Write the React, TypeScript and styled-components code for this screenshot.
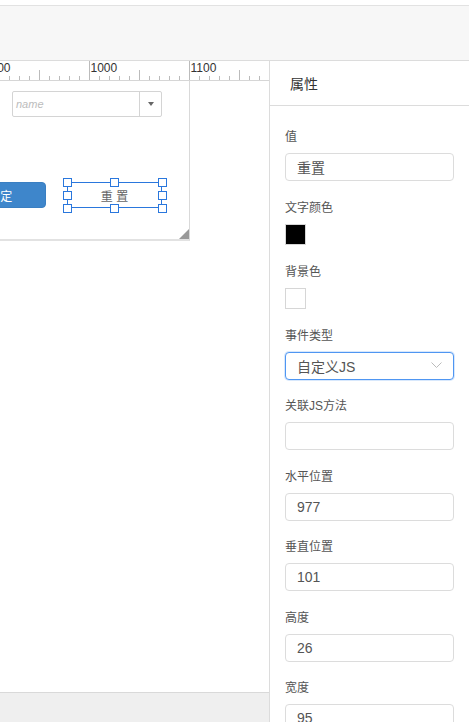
import React from 'react'
import styled, { createGlobalStyle } from 'styled-components'

const GlobalStyle = createGlobalStyle`
  html, body {
    margin: 0;
    padding: 0;
    background: #fff;
    overflow: hidden;
  }
  * {
    box-sizing: border-box;
  }
`

const cjk = `"Liberation Sans", "Noto Sans CJK SC", sans-serif`

const Shell = styled.div`
  width: 469px;
  height: 722px;
  display: flex;
  flex-direction: column;
  padding-top: 5px;
  font-family: ${cjk};
  overflow: hidden;
`

const Toolbar = styled.div`
  height: 56px;
  flex-shrink: 0;
  background: #f7f7f7;
  border-top: 1px solid #e2e2e2;
  border-bottom: 1px solid #dcdcdc;
`

const Main = styled.div`
  flex: 1;
  display: flex;
  min-height: 0;
`

const Editor = styled.div`
  width: 269px;
  flex-shrink: 0;
  display: flex;
  flex-direction: column;
`

const RulerBar = styled.div`
  height: 20px;
  flex-shrink: 0;
  border-bottom: 1px solid #d6d6d6;
  overflow: hidden;
`

const Canvas = styled.div`
  flex: 1;
  position: relative;
  overflow: hidden;
  background: #fff;
`

const StatusBar = styled.div`
  height: 30px;
  flex-shrink: 0;
  background: #efefef;
  border-top: 1px solid #d9d9d9;
`

const Artboard = styled.div`
  position: absolute;
  left: 0;
  top: 0;
  width: 190px;
  height: 160px;
  border-right: 1px solid #d9d9d9;
  border-bottom: 2px solid #e2e2e2;
`

const Grip = styled.div`
  position: absolute;
  right: 0;
  bottom: 0;
  width: 0;
  height: 0;
  border-left: 10px solid transparent;
  border-bottom: 10px solid #999;
`

const Widget = styled.div<{ $x: number; $y: number; $w: number; $h: number }>`
  position: absolute;
  left: ${p => p.$x}px;
  top: ${p => p.$y}px;
  width: ${p => p.$w}px;
  height: ${p => p.$h}px;
`

const NameSelect = styled.div`
  width: 100%;
  height: 100%;
  display: flex;
  border: 1px solid #d4d4d4;
  border-radius: 2px;
  background: #fff;
`

const NamePlaceholder = styled.span`
  flex: 1;
  padding-left: 3px;
  font-size: 11px;
  line-height: 24px;
  font-style: italic;
  color: #bcbcbc;
`

const CaretBox = styled.span`
  width: 22px;
  border-left: 1px solid #d4d4d4;
  display: flex;
  align-items: center;
  justify-content: center;
`

const Caret = styled.span`
  width: 0;
  height: 0;
  border-left: 3.5px solid transparent;
  border-right: 3.5px solid transparent;
  border-top: 4px solid #666;
`

const CanvasButton = styled.div<{ $primary?: boolean }>`
  width: 100%;
  height: 100%;
  display: flex;
  align-items: center;
  justify-content: center;
  font-size: 12px;
  white-space: pre;
  border-radius: ${p => (p.$primary ? '4px' : '0')};
  background: ${p => (p.$primary ? '#3e86cb' : 'transparent')};
  color: ${p => (p.$primary ? '#fff' : '#666')};
  border: 1px solid ${p => (p.$primary ? '#3a7fc2' : '#2a77dd')};
`

const Handle = styled.span<{ $x: string; $y: string }>`
  position: absolute;
  left: ${p => p.$x};
  top: ${p => p.$y};
  width: 9px;
  height: 9px;
  margin: -4.5px 0 0 -4.5px;
  background: #fff;
  border: 1.5px solid #2a77dd;
`

const Panel = styled.div`
  flex: 1;
  border-left: 1px solid #dcdcdc;
  display: flex;
  flex-direction: column;
  overflow: hidden;
`

const PanelHeader = styled.div`
  height: 45px;
  flex-shrink: 0;
  padding-left: 20px;
  display: flex;
  align-items: center;
  border-bottom: 1px solid #dcdcdc;
  font-size: 14px;
  color: #333;
`

const Form = styled.div`
  padding: 22px 15px 0 15px;
  display: flex;
  flex-direction: column;
  gap: 17.5px;
`

const Field = styled.div`
  display: flex;
  flex-direction: column;
  gap: 7px;
`

const Label = styled.div`
  font-size: 12px;
  line-height: 18px;
  color: #555;
`

const TextBox = styled.div<{ $focus?: boolean }>`
  height: 28px;
  flex-shrink: 0;
  display: flex;
  align-items: center;
  justify-content: space-between;
  padding: 0 11px;
  border: 1px solid ${p => (p.$focus ? '#4f96f2' : '#dcdcdc')};
  box-shadow: ${p => (p.$focus ? '0 0 0 1px rgba(79, 150, 242, 0.22)' : 'none')};
  border-radius: 4px;
  font-size: 14px;
  color: #555;
  background: #fff;
`

const Swatch = styled.div<{ $color: string }>`
  width: 21px;
  height: 21px;
  margin-bottom: 0.5px;
  background: ${p => p.$color};
  border: 1px solid #d6d6d6;
`

function Ruler() {
  const ticks = []
  for (let n = -10; n <= 18; n++) {
    const x = 89 + n * 10 + 0.5
    const major = n % 10 === 0
    const mid = !major && n % 5 === 0
    const top = major ? 0 : mid ? 9 : 15
    ticks.push(<line key={n} x1={x} x2={x} y1={top} y2={19} stroke="#bbb" strokeWidth={1} />)
  }
  const labels = [900, 1000, 1100]
  return (
    <svg width="268" height="19" style={{ display: 'block' }}>
      {ticks}
      {labels.map(v => (
        <text
          key={v}
          x={89 + (v - 1000) + 1.5}
          y={11}
          fontSize="12"
          fontFamily="Liberation Sans, Arial, sans-serif"
          fill="#333"
        >
          {v}
        </text>
      ))}
    </svg>
  )
}

const handles: Array<[string, string]> = [
  ['0%', '0%'],
  ['50%', '0%'],
  ['100%', '0%'],
  ['0%', '50%'],
  ['100%', '50%'],
  ['0%', '100%'],
  ['50%', '100%'],
  ['100%', '100%']
]

const fields = [
  { label: '水平位置', value: '977' },
  { label: '垂直位置', value: '101' },
  { label: '高度', value: '26' },
  { label: '宽度', value: '95' }
]

export default function App() {
  return (
    <Shell>
      <GlobalStyle />
      <Toolbar />
      <Main>
        <Editor>
          <RulerBar>
            <Ruler />
          </RulerBar>
          <Canvas>
            <Artboard>
              <Widget $x={12} $y={10} $w={150} $h={26}>
                <NameSelect>
                  <NamePlaceholder>name</NamePlaceholder>
                  <CaretBox>
                    <Caret />
                  </CaretBox>
                </NameSelect>
              </Widget>
              <Widget $x={-49} $y={101} $w={95} $h={26}>
                <CanvasButton $primary>{'确 定'}</CanvasButton>
              </Widget>
              <Widget $x={67} $y={101} $w={95} $h={26}>
                <CanvasButton>{'重 置'}</CanvasButton>
                {handles.map(([x, y]) => (
                  <Handle key={x + y} $x={x} $y={y} />
                ))}
              </Widget>
              <Grip />
            </Artboard>
          </Canvas>
          <StatusBar />
        </Editor>
        <Panel>
          <PanelHeader>属性</PanelHeader>
          <Form>
            <Field>
              <Label>值</Label>
              <TextBox>重置</TextBox>
            </Field>
            <Field>
              <Label>文字颜色</Label>
              <Swatch $color="#000" />
            </Field>
            <Field>
              <Label>背景色</Label>
              <Swatch $color="#fff" />
            </Field>
            <Field>
              <Label>事件类型</Label>
              <TextBox $focus>
                自定义JS
                <svg width="11" height="7" viewBox="0 0 11 7">
                  <polyline points="0.5,0.5 5.5,5.5 10.5,0.5" fill="none" stroke="#bbb" strokeWidth="1" />
                </svg>
              </TextBox>
            </Field>
            <Field>
              <Label>关联JS方法</Label>
              <TextBox />
            </Field>
            {fields.map(f => (
              <Field key={f.label}>
                <Label>{f.label}</Label>
                <TextBox>{f.value}</TextBox>
              </Field>
            ))}
          </Form>
        </Panel>
      </Main>
    </Shell>
  )
}
